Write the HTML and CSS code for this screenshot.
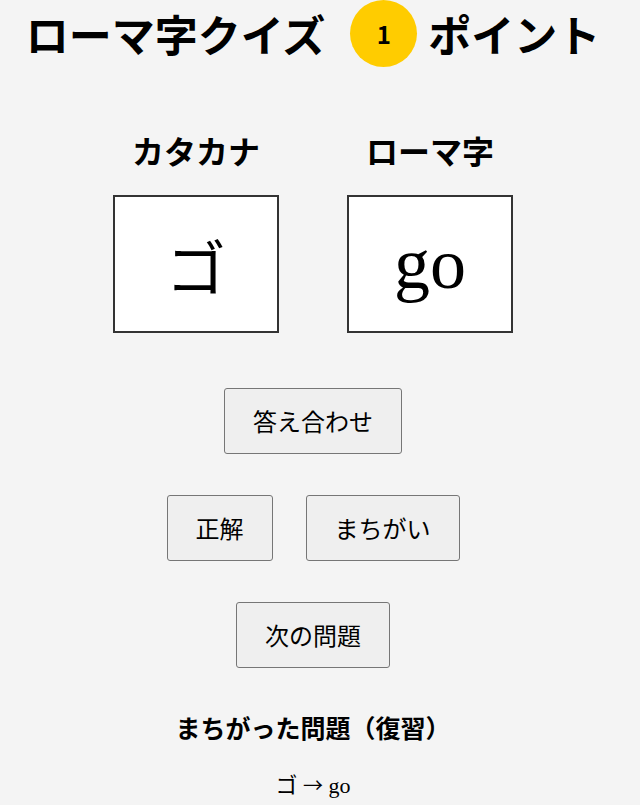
FILE: index.html
```html
<!DOCTYPE html>
<html lang="ja">
<head>
  <meta charset="UTF-8" />
  <meta name="viewport" content="width=device-width, initial-scale=1.0"/>
  <title>ローマ字クイズ</title>
  <link rel="stylesheet" href="styles.css">
</head>

<body>
  <main class="app">
    <h1 class="title">
      <span>ローマ字クイズ</span>
      <span class="score">1</span>
      <span>ポイント</span>
    </h1>

    <section class="cards">
      <div class="card">
        <h2 class="card-label">カタカナ</h2>
        <div class="card-box kana">ゴ</div>
      </div>
      <div class="card">
        <h2 class="card-label">ローマ字</h2>
        <div class="card-box">go</div>
      </div>
    </section>

    <div class="actions">
      <div class="action-row">
        <button class="btn" id="checkBtn">答え合わせ</button>
      </div>
      <div class="action-row">
        <button class="btn" id="rightBtn">正解</button>
        <button class="btn" id="wrongBtn">まちがい</button>
      </div>
      <div class="action-row">
        <button class="btn" id="nextBtn">次の問題</button>
      </div>
    </div>

    <h3 class="review-title">まちがった問題（復習）</h3>
    <ul class="review-list">
      <li>ゴ <span class="arrow">→</span> go</li>
    </ul>
  </main>
</body>
</html>
```

FILE: styles.css
```css
body {
  margin: 0;
  background: #f4f4f4;
  color: #000;
  font-family: 'Liberation Serif', 'Noto Sans CJK JP', serif;
}

.app {
  max-width: 626px;
  text-align: center;
}

/* header with the score badge */
.title {
  margin: 0;
  height: 67px;
  display: flex;
  align-items: center;
  justify-content: center;
  font-family: 'Noto Sans CJK JP', sans-serif;
  font-size: 43px;
  font-weight: 700;
  line-height: 1;
}

.score {
  width: 67px;
  height: 67px;
  margin: 0 11px 0 25px;
  border-radius: 50%;
  background: #ffcc00;
  display: flex;
  align-items: center;
  justify-content: center;
  font-size: 24px;
}

/* the two cards */
.cards {
  display: flex;
  justify-content: center;
  gap: 68px;
  margin-top: 60px;
}

.card {
  width: 166px;
}

.card-label {
  margin: 0 0 22px;
  font-family: 'Noto Sans CJK JP', sans-serif;
  font-size: 32px;
  line-height: 46px;
}

.card-box {
  box-sizing: border-box;
  height: 138px;
  border: 2px solid #333;
  background: white;
  display: flex;
  align-items: center;
  justify-content: center;
  font-size: 72px;
}

.card-box.kana {
  font-size: 60px;
}

/* buttons */
.actions {
  margin-top: 55px;
  display: flex;
  flex-direction: column;
  gap: 41px;
}

.action-row {
  display: flex;
  justify-content: center;
  gap: 33px;
}

.btn {
  font-family: 'Noto Sans CJK JP', sans-serif;
  font-size: 24px;
  line-height: 34px;
  padding: 15px 28px;
  color: #000;
  background: #efefef;
  border: 1px solid #767676;
  border-radius: 3px;
  cursor: pointer;
}

.btn:hover {
  background: #e5e5e5;
}

/* review section */
.review-title {
  margin: 42px 0 0;
  font-family: 'Noto Sans CJK JP', sans-serif;
  font-size: 25px;
  line-height: 35px;
}

.review-list {
  list-style: none;
  margin: 25px 0 0;
  padding: 0;
  font-size: 22px;
  line-height: 29px;
}

.arrow {
  font-family: 'Noto Sans CJK JP', sans-serif;
  font-size: 20px;
}
```
